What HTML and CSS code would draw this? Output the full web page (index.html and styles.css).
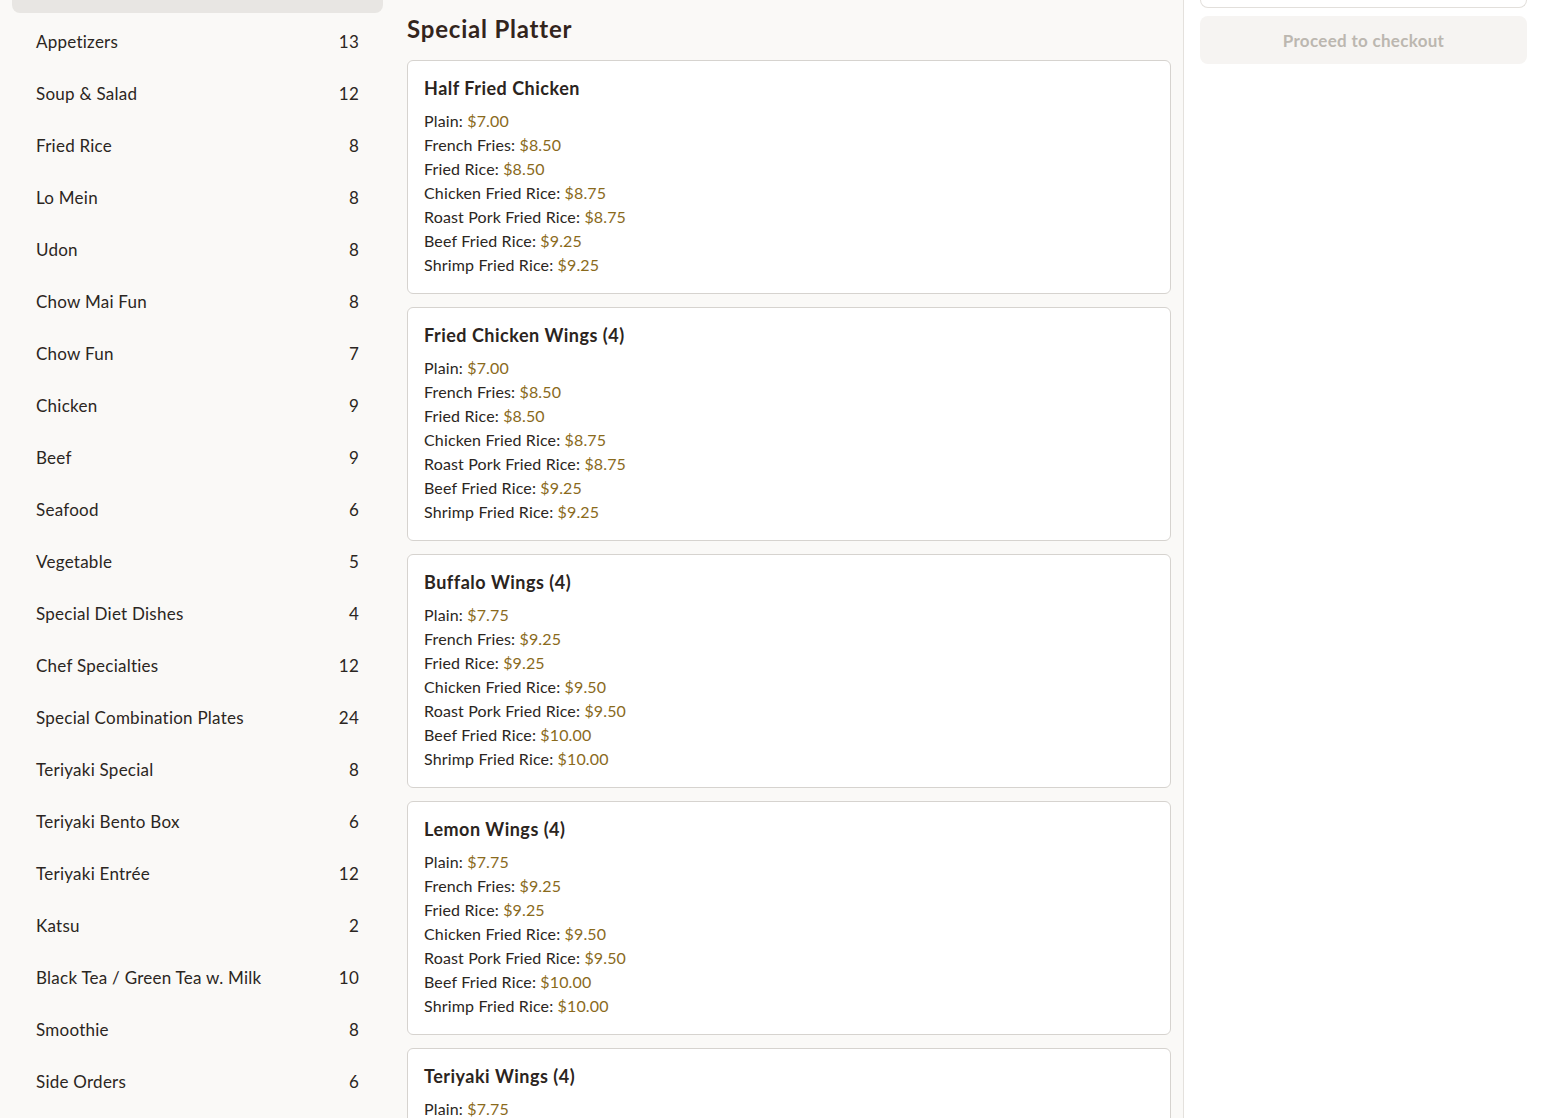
FILE: index.html
```html
<!DOCTYPE html>
<html lang="en">
<head>
<meta charset="utf-8">
<title>Menu</title>
<link rel="stylesheet" href="styles.css">
</head>
<body>
<div class="page">
  <aside class="sidebar">
    <div class="cat active"></div>
    <div class="cat"><span class="cat-name">Appetizers</span><span class="cat-count">13</span></div>
    <div class="cat"><span class="cat-name">Soup &amp; Salad</span><span class="cat-count">12</span></div>
    <div class="cat"><span class="cat-name">Fried Rice</span><span class="cat-count">8</span></div>
    <div class="cat"><span class="cat-name">Lo Mein</span><span class="cat-count">8</span></div>
    <div class="cat"><span class="cat-name">Udon</span><span class="cat-count">8</span></div>
    <div class="cat"><span class="cat-name">Chow Mai Fun</span><span class="cat-count">8</span></div>
    <div class="cat"><span class="cat-name">Chow Fun</span><span class="cat-count">7</span></div>
    <div class="cat"><span class="cat-name">Chicken</span><span class="cat-count">9</span></div>
    <div class="cat"><span class="cat-name">Beef</span><span class="cat-count">9</span></div>
    <div class="cat"><span class="cat-name">Seafood</span><span class="cat-count">6</span></div>
    <div class="cat"><span class="cat-name">Vegetable</span><span class="cat-count">5</span></div>
    <div class="cat"><span class="cat-name">Special Diet Dishes</span><span class="cat-count">4</span></div>
    <div class="cat"><span class="cat-name">Chef Specialties</span><span class="cat-count">12</span></div>
    <div class="cat"><span class="cat-name">Special Combination Plates</span><span class="cat-count">24</span></div>
    <div class="cat"><span class="cat-name">Teriyaki Special</span><span class="cat-count">8</span></div>
    <div class="cat"><span class="cat-name">Teriyaki Bento Box</span><span class="cat-count">6</span></div>
    <div class="cat"><span class="cat-name">Teriyaki Entrée</span><span class="cat-count">12</span></div>
    <div class="cat"><span class="cat-name">Katsu</span><span class="cat-count">2</span></div>
    <div class="cat"><span class="cat-name">Black Tea / Green Tea w. Milk</span><span class="cat-count">10</span></div>
    <div class="cat"><span class="cat-name">Smoothie</span><span class="cat-count">8</span></div>
    <div class="cat"><span class="cat-name">Side Orders</span><span class="cat-count">6</span></div>
  </aside>

  <main class="menu">
    <h2 class="section-title">Special Platter</h2>

    <div class="item">
      <h3 class="item-title">Half Fried Chicken</h3>
      <ul class="prices">
        <li>Plain: <span class="price">$7.00</span></li>
        <li>French Fries: <span class="price">$8.50</span></li>
        <li>Fried Rice: <span class="price">$8.50</span></li>
        <li>Chicken Fried Rice: <span class="price">$8.75</span></li>
        <li>Roast Pork Fried Rice: <span class="price">$8.75</span></li>
        <li>Beef Fried Rice: <span class="price">$9.25</span></li>
        <li>Shrimp Fried Rice: <span class="price">$9.25</span></li>
      </ul>
    </div>

    <div class="item">
      <h3 class="item-title">Fried Chicken Wings (4)</h3>
      <ul class="prices">
        <li>Plain: <span class="price">$7.00</span></li>
        <li>French Fries: <span class="price">$8.50</span></li>
        <li>Fried Rice: <span class="price">$8.50</span></li>
        <li>Chicken Fried Rice: <span class="price">$8.75</span></li>
        <li>Roast Pork Fried Rice: <span class="price">$8.75</span></li>
        <li>Beef Fried Rice: <span class="price">$9.25</span></li>
        <li>Shrimp Fried Rice: <span class="price">$9.25</span></li>
      </ul>
    </div>

    <div class="item">
      <h3 class="item-title">Buffalo Wings (4)</h3>
      <ul class="prices">
        <li>Plain: <span class="price">$7.75</span></li>
        <li>French Fries: <span class="price">$9.25</span></li>
        <li>Fried Rice: <span class="price">$9.25</span></li>
        <li>Chicken Fried Rice: <span class="price">$9.50</span></li>
        <li>Roast Pork Fried Rice: <span class="price">$9.50</span></li>
        <li>Beef Fried Rice: <span class="price">$10.00</span></li>
        <li>Shrimp Fried Rice: <span class="price">$10.00</span></li>
      </ul>
    </div>

    <div class="item">
      <h3 class="item-title">Lemon Wings (4)</h3>
      <ul class="prices">
        <li>Plain: <span class="price">$7.75</span></li>
        <li>French Fries: <span class="price">$9.25</span></li>
        <li>Fried Rice: <span class="price">$9.25</span></li>
        <li>Chicken Fried Rice: <span class="price">$9.50</span></li>
        <li>Roast Pork Fried Rice: <span class="price">$9.50</span></li>
        <li>Beef Fried Rice: <span class="price">$10.00</span></li>
        <li>Shrimp Fried Rice: <span class="price">$10.00</span></li>
      </ul>
    </div>

    <div class="item">
      <h3 class="item-title">Teriyaki Wings (4)</h3>
      <ul class="prices">
        <li>Plain: <span class="price">$7.75</span></li>
        <li>French Fries: <span class="price">$9.25</span></li>
        <li>Fried Rice: <span class="price">$9.25</span></li>
        <li>Chicken Fried Rice: <span class="price">$9.50</span></li>
        <li>Roast Pork Fried Rice: <span class="price">$9.50</span></li>
        <li>Beef Fried Rice: <span class="price">$10.00</span></li>
        <li>Shrimp Fried Rice: <span class="price">$10.00</span></li>
      </ul>
    </div>
  </main>

  <aside class="cart">
    <div class="cart-box"></div>
    <button class="checkout" type="button" disabled>Proceed to checkout</button>
  </aside>
</div>
</body>
</html>
```

FILE: styles.css
```css
html, body {
  margin: 0;
  padding: 0;
  height: 100%;
  overflow: hidden;
}
body {
  background: #faf9f7;
  font-family: Lato, "Noto Sans", sans-serif;
  color: #2b2622;
}
.page {
  display: flex;
  align-items: flex-start;
  height: 1118px;
  overflow: hidden;
}
.sidebar {
  width: 371px;
  flex: none;
  padding: 0 12px;
  margin-top: -35px;
  display: flex;
  flex-direction: column;
  gap: 4px;
}
.cat {
  height: 48px;
  flex: none;
  display: flex;
  align-items: center;
  justify-content: space-between;
  padding: 0 24px;
  font-size: 17px;
  letter-spacing: 0.25px;
  color: #2b2622;
  border-radius: 8px;
}
.cat.active {
  background: #e8e6e3;
}
.menu {
  width: 764px;
  flex: none;
  padding: 12px 12px 0;
  border-right: 1px solid #e4e1dd;
  min-height: 1118px;
}
.section-title {
  margin: 0 0 14px;
  font-size: 24px;
  line-height: 34px;
  font-weight: 700;
  letter-spacing: 0.8px;
  color: #33251d;
}
.item {
  background: #fff;
  border: 1px solid #d6d3cf;
  border-radius: 6px;
  padding: 16px;
  margin-bottom: 13px;
}
.item-title {
  margin: 0 0 10px;
  font-size: 18px;
  line-height: 22px;
  font-weight: 700;
  letter-spacing: 0.5px;
  color: #2b2420;
}
.prices {
  list-style: none;
  margin: 0;
  padding: 0;
  font-size: 16px;
  line-height: 24px;
  letter-spacing: 0.15px;
}
.price {
  color: #8a6a1c;
}
.cart {
  flex: 1;
  background: #fff;
  min-height: 1118px;
  padding: 0 17px 0 16px;
}
.cart-box {
  height: 7px;
  border: 1px solid #e2dfdb;
  border-top: none;
  border-radius: 0 0 8px 8px;
}
.checkout {
  display: block;
  width: 100%;
  height: 48px;
  margin-top: 8px;
  border: none;
  border-radius: 8px;
  background: #f6f4f2;
  color: #bcb7b0;
  font-family: inherit;
  font-size: 17px;
  font-weight: 700;
  letter-spacing: 0.3px;
}
```
